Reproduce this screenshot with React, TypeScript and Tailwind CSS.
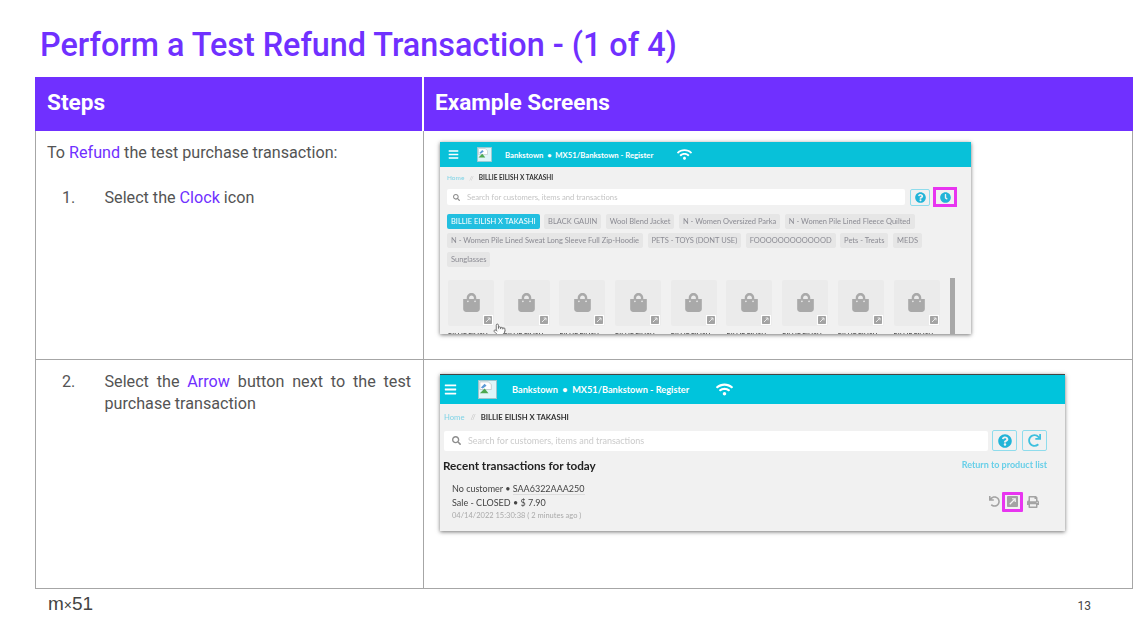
import { Pointer } from "lucide-react";
import { FaBars, FaClock, FaPrint, FaQuestionCircle, FaRedo, FaSearch, FaShoppingBag, FaUndo, FaWifi } from "react-icons/fa";

const chipRows = [
  ["BILLIE EILISH X TAKASHI", "BLACK GAIJIN", "Wool Blend Jacket", "N - Women Oversized Parka", "N - Women Pile Lined Fleece Quilted"],
  ["N - Women Pile Lined Sweat Long Sleeve Full Zip-Hoodie", "PETS - TOYS (DONT USE)", "FOOOOOOOOOOOOD", "Pets - Treats", "MEDS"],
  ["Sunglasses"],
];

function BrokenImage({ size }: { size: number }) {
  return (
    <svg width={size} height={size} viewBox="0 0 20 20" className="shrink-0">
      <rect x="0.5" y="0.5" width="19" height="19" fill="#dff5f8" stroke="#9fc4cc" />
      <path d="M2 2h9l3 3v5H2z" fill="#fff" stroke="#b4bec0" strokeWidth="0.7" />
      <path d="M2 14l5-5 4 5z" fill="#4da84f" />
      <path d="M3 8l4-4 2 2-4 3z" fill="#5c9ad6" />
    </svg>
  );
}

function ExpandIcon({ size }: { size: number }) {
  return (
    <svg width={size} height={size} viewBox="0 0 12 12" className="shrink-0">
      <rect width="12" height="12" rx="1" fill="#a3a3a3" />
      <path d="M3 9l5.500-5.500M5.500 3h3.500v3.500" stroke="#f4f4f4" strokeWidth="1.300" fill="none" />
    </svg>
  );
}

function ProductTile() {
  return (
    <div className="w-[46px] shrink-0">
      <div className="relative flex h-[46px] items-center justify-center rounded-[2px] bg-[#ebebeb] pb-[2px] text-[#a9a9a9]">
        <FaShoppingBag size={19} />
        <span className="absolute right-[1px] bottom-[1px] flex h-[10px] w-[10px] items-center justify-center bg-white">
          <ExpandIcon size={8} />
        </span>
      </div>
      <div className="mt-[7px] text-[6.500px] leading-[8px] font-bold whitespace-nowrap text-[#555]">BILLIE EILISH</div>
    </div>
  );
}

function ClockScreen() {
  return (
    <div className="relative h-[192px] w-[531px] overflow-hidden bg-[#f1f1f1] font-['Lato',sans-serif] shadow-[0_1px_4px_rgba(0,0,0,0.55)] blur-[0.3px]">
      <div className="flex h-[25px] items-center bg-[#08c1d9] pl-[8px] text-white">
        <FaBars size={11} />
        <span className="ml-[18px]"><BrokenImage size={15} /></span>
        <span className="ml-[13px] text-[7.700px] font-bold">Bankstown&nbsp; •&nbsp; MX51/Bankstown - Register</span>
        <FaWifi size={15} className="ml-[24px]" />
      </div>
      <div className="px-[7px]">
        <div className="flex h-[20px] items-center pt-[2px] text-[6.500px]">
          <span className="text-[#7fd3e6]">Home</span>
          <span className="ml-[5px] text-[#c8c8c8]">//</span>
          <span className="ml-[5px] font-bold text-[#333]">BILLIE EILISH X TAKASHI</span>
        </div>
        <div className="flex items-center">
          <div className="flex h-[16px] w-[458px] items-center rounded-[2px] bg-white pl-[6px] text-[7.700px] text-[#c4c4c4]">
            <FaSearch size={7} className="text-[#8d8d8d]" />
            <span className="ml-[7px]">Search for customers, items and transactions</span>
          </div>
          <div className="ml-[5px] flex h-[17px] w-[20px] items-center justify-center rounded-[2px] border border-[#8fdcec] text-[#22b4d8]">
            <FaQuestionCircle size={11} />
          </div>
          <div className="ml-[3px] flex h-[20px] w-[24px] items-center justify-center border-[3px] border-[#e835f0] text-[#22b4d8]">
            <FaClock size={11} />
          </div>
        </div>
        <div className="mt-[7px] flex flex-col gap-[4px]">
          {chipRows.map((row, i) => (
            <div key={i} className="flex gap-[4.500px]">
              {row.map((chip, j) => (
                <span
                  key={chip}
                  className={
                    i === 0 && j === 0
                      ? "flex h-[15px] items-center rounded-[2px] bg-[#22bfe0] px-[4px] text-[7.500px] text-white"
                      : "flex h-[15px] items-center rounded-[2px] bg-[#e6e6e6] px-[4px] text-[7.500px] text-[#8b8b93]"
                  }
                >
                  {chip}
                </span>
              ))}
            </div>
          ))}
        </div>
        <div className="mt-[13px] flex gap-[9.700px] pl-[1px]">
          {Array.from({ length: 9 }).map((_, i) => (
            <ProductTile key={i} />
          ))}
          <div className="-mt-[2px] ml-[1px] h-[60px] w-[5px] bg-[#a8a8a8]" />
        </div>
      </div>
      <Pointer size={13} strokeWidth={1.500} className="absolute top-[181px] left-[53px] fill-white text-[#555]" />
    </div>
  );
}

function ArrowScreen() {
  return (
    <div className="h-[157px] w-[625px] overflow-hidden border-t border-[#444] bg-[#f1f1f1] font-['Lato',sans-serif] shadow-[0_1px_4px_rgba(0,0,0,0.55)] blur-[0.3px]">
      <div className="flex h-[29px] items-center bg-[#00c4dc] pl-[4px] text-white">
        <FaBars size={13} />
        <span className="ml-[21px]"><BrokenImage size={19} /></span>
        <span className="ml-[15px] text-[9.200px] font-bold">Bankstown&nbsp; •&nbsp; MX51/Bankstown - Register</span>
        <FaWifi size={17} className="ml-[27px]" />
      </div>
      <div className="px-[4px]">
        <div className="flex h-[26px] items-center text-[7.700px]">
          <span className="text-[#7fd3e6]">Home</span>
          <span className="ml-[6px] text-[#c8c8c8]">//</span>
          <span className="ml-[5px] font-bold text-[#333]">BILLIE EILISH X TAKASHI</span>
        </div>
        <div className="flex items-center">
          <div className="flex h-[20px] w-[544px] items-center rounded-[2px] bg-white pl-[8px] text-[9px] text-[#cbcbcb]">
            <FaSearch size={9} className="text-[#8d8d8d]" />
            <span className="ml-[7px]">Search for customers, items and transactions</span>
          </div>
          <div className="ml-[4px] flex h-[21px] w-[25px] items-center justify-center rounded-[2px] border border-[#8fdcec] text-[#22b4d8]">
            <FaQuestionCircle size={14} />
          </div>
          <div className="ml-[5px] flex h-[21px] w-[25px] items-center justify-center rounded-[2px] border border-[#8fdcec] text-[#3fc0de]">
            <FaRedo size={13} />
          </div>
        </div>
        <div className="mt-[6px] flex h-[16px] items-center justify-between pr-[14px]">
          <span className="-ml-[1px] text-[11.700px] leading-[16px] font-bold text-[#222]">Recent transactions for today</span>
          <span className="text-[9px] leading-[16px] font-bold text-[#67cfe8]">Return to product list</span>
        </div>
        <div className="flex items-center justify-between pr-[22px] pl-[8px]">
          <div className="pt-[9px] text-[9px] leading-[13.500px] text-[#444]">
            <div>No customer • <span className="border-b border-[#ddd]">SAA6322AAA250</span></div>
            <div>Sale - CLOSED • $ 7.90</div>
            <div className="text-[7.500px] text-[#aaa]">04/14/2022 15:30:38 ( 2 minutes ago )</div>
          </div>
          <div className="flex items-center pt-[8px] text-[#a3a3a3]">
            <FaUndo size={11} />
            <span className="mx-[2px] flex h-[20px] w-[21px] items-center justify-center rounded-[1px] border-[3px] border-[#e835f0]">
              <ExpandIcon size={11} />
            </span>
            <FaPrint size={12} className="ml-[2px]" />
          </div>
        </div>
      </div>
    </div>
  );
}

export default function App() {
  return (
    <div className="h-[635px] w-[1145px] overflow-hidden bg-white font-['Roboto',sans-serif] text-[#545454]">
      <h1 className="h-[77px] pt-[26px] pl-[40px] text-[32.360px] leading-[38px] font-medium text-[#7030ff]">
        Perform a Test Refund Transaction - (1 of 4)
      </h1>
      <div className="ml-[35px] w-[1098px]">
        <div className="grid h-[54px] grid-cols-[389px_709px] bg-[#7030ff] text-[22.600px] font-bold text-white">
          <div className="flex items-center border-r-2 border-white pb-[2px] pl-[12px]">Steps</div>
          <div className="flex items-center pb-[2px] pl-[11px]">Example Screens</div>
        </div>
        <div className="grid grid-cols-[388px_708px] border-x border-b border-[#a6a6a6] text-[16.150px] leading-[22px]">
          <div className="h-[229px] border-r border-b border-[#a6a6a6] pt-[11px] pl-[11px]">
            <p>
              To <span className="text-[#7030ff]">Refund</span> the test purchase transaction:
            </p>
            <div className="mt-[23px] flex pl-[15px]">
              <span className="w-[42.500px]">1.</span>
              <p>
                Select the <span className="text-[#7030ff]">Clock</span> icon
              </p>
            </div>
          </div>
          <div className="h-[229px] border-b border-[#a6a6a6] pt-[11px] pl-[16px]">
            <ClockScreen />
          </div>
          <div className="h-[228px] border-r border-[#a6a6a6] pt-[11px] pr-[12px] pl-[26px]">
            <div className="flex">
              <span className="w-[42.500px] shrink-0">2.</span>
              <p className="text-justify">
                Select the <span className="text-[#7030ff]">Arrow</span> button next to the test purchase transaction
              </p>
            </div>
          </div>
          <div className="h-[228px] pt-[14px] pl-[16px]">
            <ArrowScreen />
          </div>
        </div>
      </div>
      <div className="flex items-start justify-between pt-[3px] pr-[54px] pl-[48px]">
        <span className="font-['Liberation_Sans',sans-serif] text-[19px] leading-[24px] text-[#444]">
          m<span className="text-[14px]">×</span>51
        </span>
        <span className="pt-[7px] text-[12px] leading-[14px] text-[#444]">13</span>
      </div>
    </div>
  );
}
